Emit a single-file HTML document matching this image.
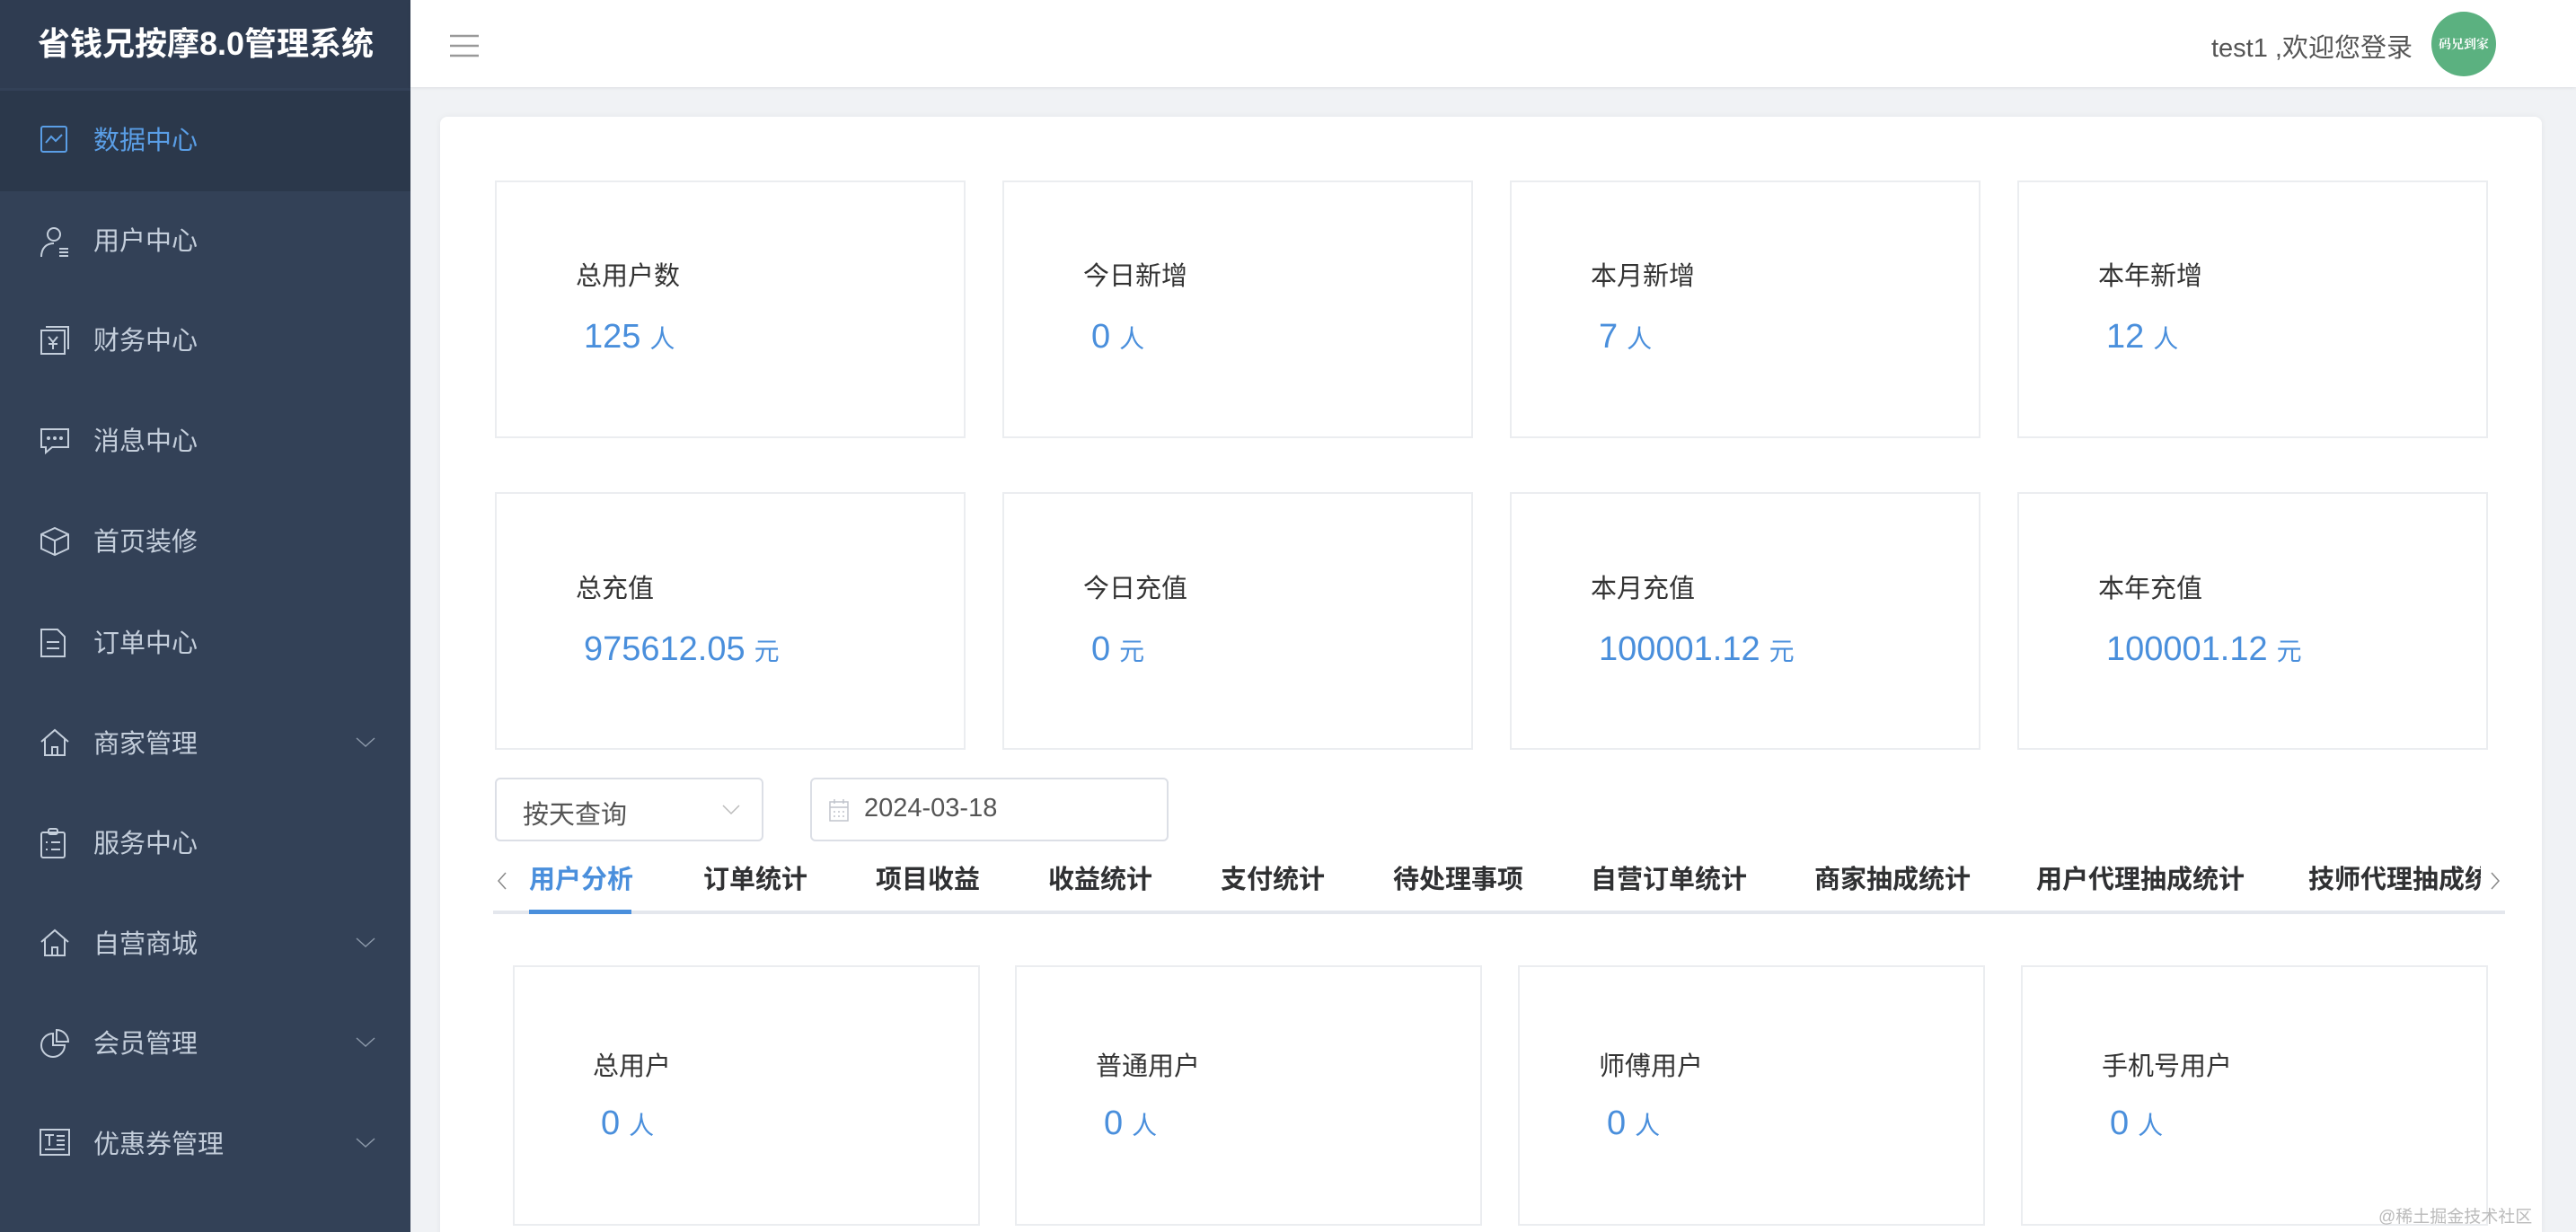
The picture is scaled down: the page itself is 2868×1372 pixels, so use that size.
<!DOCTYPE html>
<html><head><meta charset="utf-8"><style>
*{margin:0;padding:0;box-sizing:border-box}
html,body{width:2868px;height:1372px;overflow:hidden}
body{background:#f0f2f5;font-family:"Liberation Sans","Noto Sans CJK SC",sans-serif;position:relative}
.side{position:absolute;left:0;top:0;width:457px;height:1372px;background:#334157}
.logo{position:absolute;left:0;top:0;width:457px;height:98px;background:#2f3c51;color:#fff;font-weight:bold;font-size:36px;line-height:98px;padding-left:42px;white-space:nowrap}
.mi{position:absolute;left:0;width:457px;height:112px;color:#c4cedb;font-size:29px;line-height:112px;padding-left:104px;white-space:nowrap}
.mi.act{background:#2b384b;color:#5a9ee6}
.mi svg{position:absolute;left:44px;top:38px}
.mi .ch{position:absolute;left:396px;top:48px}
.hdr{position:absolute;left:457px;top:0;width:2411px;height:97px;background:#fff;box-shadow:0 1px 4px rgba(0,0,0,.08)}
.card{position:absolute;left:490px;top:130px;width:2340px;height:1300px;background:#fff;border-radius:8px;box-shadow:0 0 8px rgba(0,0,0,.05)}
.box{position:absolute;border:2px solid #ebedf0;background:#fff}
.lb{position:absolute;font-size:29px;color:#333;white-space:nowrap}
.val{position:absolute;font-size:38px;color:#4a8fdc;white-space:nowrap}
.val small{font-size:28px;margin-left:10px}
.tab{position:absolute;font-size:29px;color:#303133;font-weight:bold;white-space:nowrap}
</style></head><body>
<div class="side">
<div class="logo">省钱兄按摩8.0管理系统</div>
<div class="mi act" style="top:101px"><svg width="32" height="32" viewBox="0 0 32 32" fill="none" stroke="#5a9ee6" stroke-width="2"><rect x="2" y="2" width="28" height="28" rx="2"/><path d="M7 20l6-7 5 5 7-7"/></svg>数据中心</div>
<div class="mi" style="top:213px"><svg width="36" height="36" viewBox="0 0 36 36" fill="none" stroke="#c4cedb" stroke-width="2"><circle cx="16" cy="10" r="7"/><path d="M2 35c0-10 6-15 14-15"/><path d="M22 26h10M22 30h10M22 34h10"/></svg>用户中心</div>
<div class="mi" style="top:324px"><svg width="34" height="34" viewBox="0 0 34 34" fill="none" stroke="#c4cedb" stroke-width="2"><rect x="2" y="6" width="26" height="26"/><path d="M7 2h25v25"/><path d="M10 13l5 6 5-6M15 19v8M10 21h10"/></svg>财务中心</div>
<div class="mi" style="top:436px"><svg width="34" height="32" viewBox="0 0 34 32" fill="none" stroke="#c4cedb" stroke-width="2"><path d="M2 4h30v20H14l-7 6v-6H2z"/><circle cx="10" cy="14" r="1"/><circle cx="17" cy="14" r="1"/><circle cx="24" cy="14" r="1"/></svg>消息中心</div>
<div class="mi" style="top:548px"><svg width="34" height="34" viewBox="0 0 34 34" fill="none" stroke="#c4cedb" stroke-width="2"><path d="M17 2l15 7v16l-15 7-15-7V9z"/><path d="M2 9l15 7 15-7M17 16v16"/></svg>首页装修</div>
<div class="mi" style="top:661px"><svg width="30" height="34" viewBox="0 0 30 34" fill="none" stroke="#c4cedb" stroke-width="2"><path d="M2 2h18l8 8v22H2z"/><path d="M8 16h14M8 23h14"/></svg>订单中心</div>
<div class="mi" style="top:773px"><svg width="34" height="32" viewBox="0 0 34 32" fill="none" stroke="#c4cedb" stroke-width="2"><path d="M2 15L17 2l15 13M6 12v18h22V12M14 30v-9h6v9"/></svg>商家管理<svg class="ch" width="22" height="12" viewBox="0 0 22 12" fill="none" stroke="#8a97a8" stroke-width="1.5"><path d="M1 1l10 9 10-9"/></svg></div>
<div class="mi" style="top:884px"><svg width="30" height="34" viewBox="0 0 30 34" fill="none" stroke="#c4cedb" stroke-width="2"><rect x="2" y="5" width="26" height="28" rx="2"/><rect x="10" y="1" width="10" height="6" rx="2"/><path d="M7 16h2M13 16h10M7 24h2M13 24h10"/></svg>服务中心</div>
<div class="mi" style="top:996px"><svg width="34" height="32" viewBox="0 0 34 32" fill="none" stroke="#c4cedb" stroke-width="2"><path d="M2 15L17 2l15 13M6 12v18h22V12M14 30v-9h6v9"/></svg>自营商城<svg class="ch" width="22" height="12" viewBox="0 0 22 12" fill="none" stroke="#8a97a8" stroke-width="1.5"><path d="M1 1l10 9 10-9"/></svg></div>
<div class="mi" style="top:1107px"><svg width="34" height="34" viewBox="0 0 34 34" fill="none" stroke="#c4cedb" stroke-width="2"><path d="M15 6A13 13 0 1 0 28 19H15z"/><path d="M19 2a13 13 0 0 1 13 13H19z"/></svg>会员管理<svg class="ch" width="22" height="12" viewBox="0 0 22 12" fill="none" stroke="#8a97a8" stroke-width="1.5"><path d="M1 1l10 9 10-9"/></svg></div>
<div class="mi" style="top:1219px"><svg width="34" height="30" viewBox="0 0 34 30" fill="none" stroke="#c4cedb" stroke-width="2"><rect x="1" y="1" width="32" height="28"/><path d="M6 7h10M11 7v12M19 8h9M19 13h9M19 18h9M6 23h22"/></svg>优惠券管理<svg class="ch" width="22" height="12" viewBox="0 0 22 12" fill="none" stroke="#8a97a8" stroke-width="1.5"><path d="M1 1l10 9 10-9"/></svg></div>
</div>
<div class="hdr">
<svg style="position:absolute;left:44px;top:38px" width="32" height="26" viewBox="0 0 32 26" stroke="#999" stroke-width="2.5"><path d="M0 2h32M0 13h32M0 24h32"/></svg>
<div style="position:absolute;right:182px;top:30px;font-size:29px;color:#555;white-space:nowrap">test1 ,欢迎您登录</div>
<div style="position:absolute;left:2250px;top:13px;width:72px;height:72px;border-radius:50%;background:#5bb180;color:#fff;font-size:14px;font-weight:bold;line-height:72px;text-align:center;font-family:'Noto Serif CJK SC',serif;white-space:nowrap">码兄到家</div>
</div>
<div class="card"></div>
<div class="box" style="left:551px;top:201px;width:524px;height:287px"></div>
<div class="box" style="left:1116px;top:201px;width:524px;height:287px"></div>
<div class="box" style="left:1681px;top:201px;width:524px;height:287px"></div>
<div class="box" style="left:2246px;top:201px;width:524px;height:287px"></div>
<div class="lb" style="left:641px;top:284px">总用户数</div><div class="val" style="left:650px;top:354px">125<small>人</small></div>
<div class="lb" style="left:1206px;top:284px">今日新增</div><div class="val" style="left:1215px;top:354px">0<small>人</small></div>
<div class="lb" style="left:1771px;top:284px">本月新增</div><div class="val" style="left:1780px;top:354px">7<small>人</small></div>
<div class="lb" style="left:2336px;top:284px">本年新增</div><div class="val" style="left:2345px;top:354px">12<small>人</small></div>
<div class="box" style="left:551px;top:548px;width:524px;height:287px"></div>
<div class="box" style="left:1116px;top:548px;width:524px;height:287px"></div>
<div class="box" style="left:1681px;top:548px;width:524px;height:287px"></div>
<div class="box" style="left:2246px;top:548px;width:524px;height:287px"></div>
<div class="lb" style="left:641px;top:632px">总充值</div><div class="val" style="left:650px;top:702px">975612.05<small>元</small></div>
<div class="lb" style="left:1206px;top:632px">今日充值</div><div class="val" style="left:1215px;top:702px">0<small>元</small></div>
<div class="lb" style="left:1771px;top:632px">本月充值</div><div class="val" style="left:1780px;top:702px">100001.12<small>元</small></div>
<div class="lb" style="left:2336px;top:632px">本年充值</div><div class="val" style="left:2345px;top:702px">100001.12<small>元</small></div>
<div style="position:absolute;left:551px;top:866px;width:299px;height:71px;border:2px solid #dcdfe6;border-radius:6px"></div>
<div style="position:absolute;left:582px;top:884px;font-size:29px;color:#555">按天查询</div>
<svg style="position:absolute;left:804px;top:896px" width="20" height="12" viewBox="0 0 20 12" fill="none" stroke="#bbb" stroke-width="1.5"><path d="M1 1l9 9 9-9"/></svg>
<div style="position:absolute;left:902px;top:866px;width:399px;height:71px;border:2px solid #dcdfe6;border-radius:6px"></div>
<svg style="position:absolute;left:923px;top:889px" width="22" height="26" viewBox="0 0 22 26" fill="none" stroke="#c0c4cc" stroke-width="1.5"><rect x="1" y="4" width="20" height="21"/><path d="M1 10h20M6 1v5M16 1v5M5 15h2M10 15h2M15 15h2M5 20h2M10 20h2M15 20h2"/></svg>
<div style="position:absolute;left:962px;top:884px;font-size:29px;color:#555">2024-03-18</div>
<svg style="position:absolute;left:554px;top:971px" width="10" height="20" viewBox="0 0 10 20" fill="none" stroke="#888" stroke-width="1.5"><path d="M9 1L1 10l8 9"/></svg>
<svg style="position:absolute;left:2773px;top:971px" width="10" height="20" viewBox="0 0 10 20" fill="none" stroke="#888" stroke-width="1.5"><path d="M1 1l8 9-8 9"/></svg>
<div style="position:absolute;left:549px;top:1014px;width:2240px;height:4px;background:#e4e7ed"></div>
<div style="position:absolute;left:589px;top:1013px;width:114px;height:5px;background:#4a8fdc"></div>
<div style="position:absolute;left:570px;top:940px;width:2192px;height:70px;overflow:hidden;white-space:nowrap">
<div class="tab" style="left:19px;top:16px;color:#4a8fdc">用户分析</div>
<div class="tab" style="left:213px;top:16px">订单统计</div>
<div class="tab" style="left:405px;top:16px">项目收益</div>
<div class="tab" style="left:597px;top:16px">收益统计</div>
<div class="tab" style="left:789px;top:16px">支付统计</div>
<div class="tab" style="left:981px;top:16px">待处理事项</div>
<div class="tab" style="left:1201px;top:16px">自营订单统计</div>
<div class="tab" style="left:1450px;top:16px">商家抽成统计</div>
<div class="tab" style="left:1697px;top:16px">用户代理抽成统计</div>
<div class="tab" style="left:2000px;top:16px">技师代理抽成统计</div>
</div>
<div class="box" style="left:571px;top:1075px;width:520px;height:290px"></div>
<div class="box" style="left:1130px;top:1075px;width:520px;height:290px"></div>
<div class="box" style="left:1690px;top:1075px;width:520px;height:290px"></div>
<div class="box" style="left:2250px;top:1075px;width:520px;height:290px"></div>
<div class="lb" style="left:660px;top:1164px">总用户</div><div class="val" style="left:669px;top:1230px">0<small>人</small></div>
<div class="lb" style="left:1220px;top:1164px">普通用户</div><div class="val" style="left:1229px;top:1230px">0<small>人</small></div>
<div class="lb" style="left:1780px;top:1164px">师傅用户</div><div class="val" style="left:1789px;top:1230px">0<small>人</small></div>
<div class="lb" style="left:2340px;top:1164px">手机号用户</div><div class="val" style="left:2349px;top:1230px">0<small>人</small></div>
<div style="position:absolute;left:2648px;top:1340px;font-size:19px;color:#bbb;white-space:nowrap">@稀土掘金技术社区</div>
</body></html>
